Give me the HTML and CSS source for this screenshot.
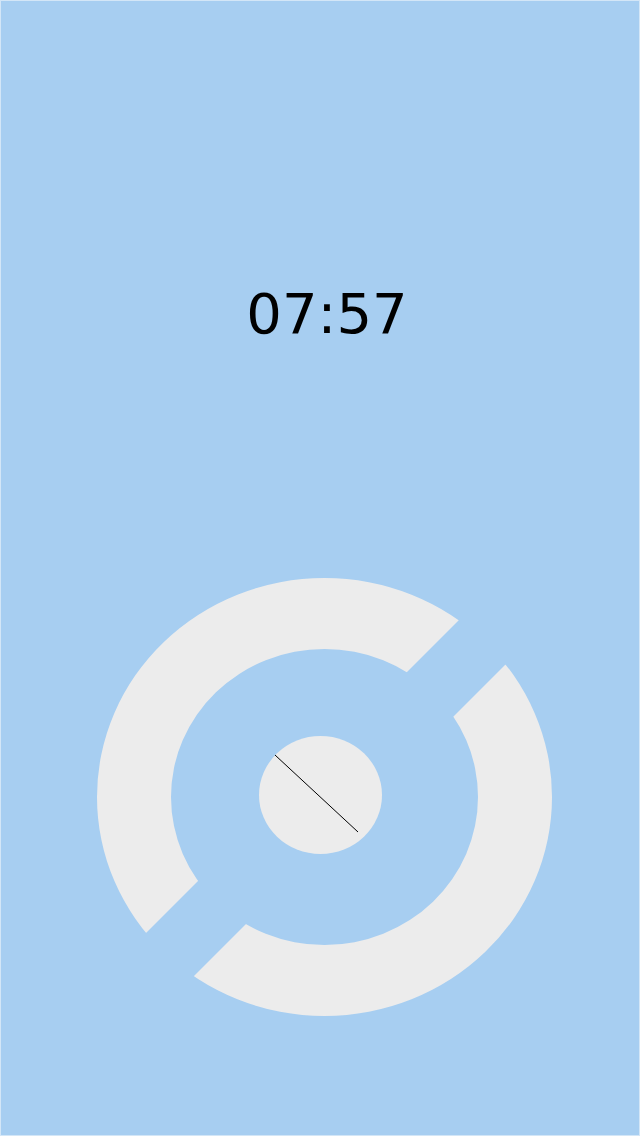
FILE: index.html
```html
<!DOCTYPE html>
<html>
<head>
<meta charset="utf-8">
<link rel="stylesheet" href="styles.css">
</head>
<body>
<div class="screen">
  <div class="time">07:57</div>
  <svg class="dial" width="638" height="480" viewBox="1 560 638 480">
    <defs>
      <mask id="cut" maskUnits="userSpaceOnUse" x="0" y="500" width="700" height="600">
        <rect x="0" y="500" width="700" height="600" fill="#fff"/>
        <polygon points="640,439 0,1079 0,1170 640,530" fill="#000"/>
      </mask>
    </defs>
    <path mask="url(#cut)" fill="#ececec" fill-rule="evenodd"
      d="M97 797 A227.5 219 0 1 0 552 797 A227.5 219 0 1 0 97 797 Z
         M171 797 A153.5 148 0 1 0 478 797 A153.5 148 0 1 0 171 797 Z"/>
    <ellipse cx="320.5" cy="795" rx="61.5" ry="59" fill="#ececec"/>
    <line x1="275" y1="755" x2="358" y2="832" stroke="#000" stroke-width="1"/>
  </svg>
</div>
</body>
</html>
```
FILE: styles.css
```css
html, body {
  margin: 0;
  padding: 0;
  background: #a7cef1;
}
.screen {
  box-sizing: border-box;
  width: 640px;
  height: 1136px;
  border: 1px solid #d3e6f7;
  background: #a7cef1;
  display: flex;
  flex-direction: column;
  overflow: hidden;
}
.time {
  padding-top: 285px;
  padding-left: 14px;
  font-family: "DejaVu Sans", sans-serif;
  font-size: 56px;
  line-height: 56px;
  text-align: center;
  color: #000;
}
.dial {
  display: block;
  margin-top: 218px;
}
```
